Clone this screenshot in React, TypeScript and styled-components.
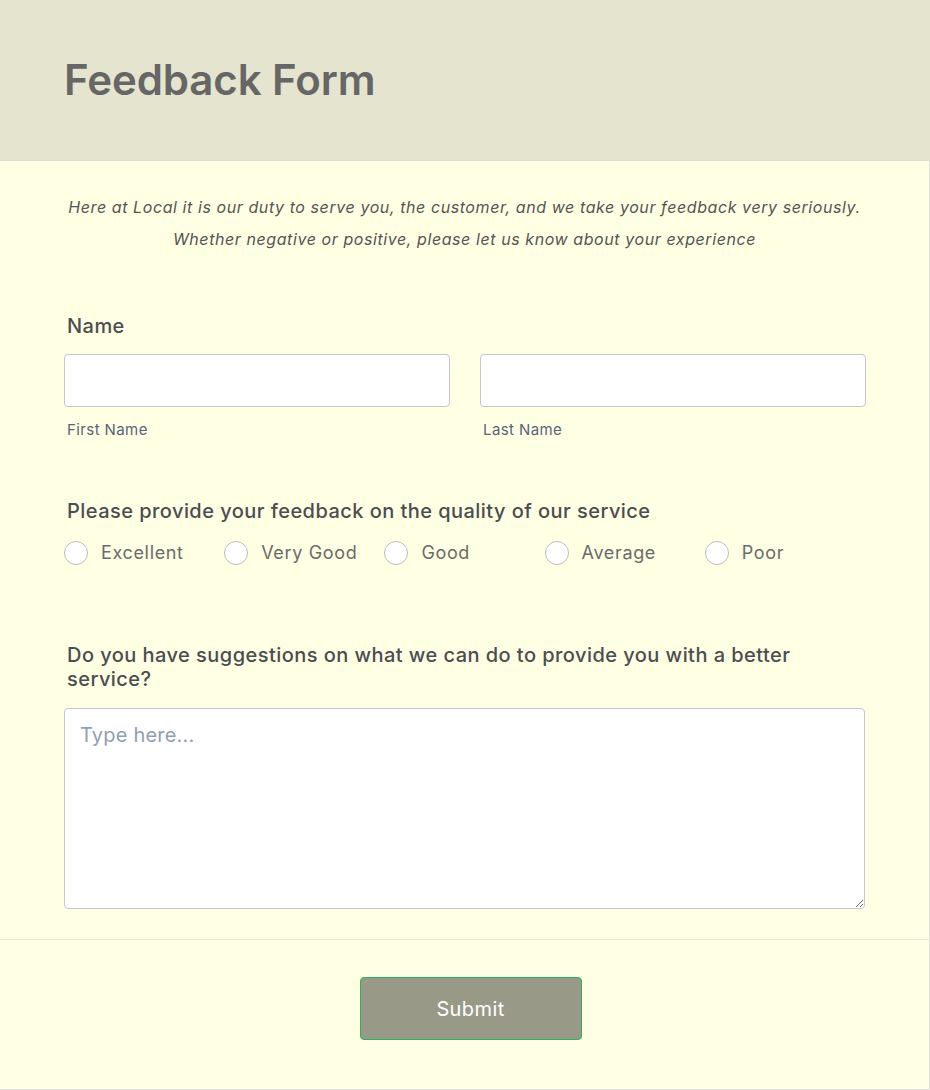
import styled, { createGlobalStyle } from "styled-components";

const GlobalStyle = createGlobalStyle`
  html, body {
    margin: 0;
    padding: 0;
    background: #ffffe3;
  }
  body {
    font-family: Inter, "Noto Sans", sans-serif;
  }
  * {
    box-sizing: border-box;
  }
`;

const ratings = ["Excellent", "Very Good", "Good", "Average", "Poor"];

const App = () => {
  return (
    <>
      <GlobalStyle />
      <StyledPage>
        <StyledHeader>
          <StyledTitle>Feedback Form</StyledTitle>
        </StyledHeader>
        <StyledBody>
          <StyledIntro>
            Here at Local it is our duty to serve you, the customer, and we take your feedback very seriously.
            <br />
            Whether negative or positive, please let us know about your experience
          </StyledIntro>

          <StyledSection $top={59}>
            <StyledLabel>Name</StyledLabel>
            <StyledNameRow>
              <StyledField>
                <StyledInput type="text" />
                <StyledSubLabel>First Name</StyledSubLabel>
              </StyledField>
              <StyledField>
                <StyledInput type="text" />
                <StyledSubLabel>Last Name</StyledSubLabel>
              </StyledField>
            </StyledNameRow>
          </StyledSection>

          <StyledSection $top={60}>
            <StyledLabel $bottom={17}>Please provide your feedback on the quality of our service</StyledLabel>
            <StyledRadioGrid>
              {ratings.map((r) => (
                <StyledRadioItem key={r}>
                  <StyledRadio type="radio" name="quality" />
                  <span>{r}</span>
                </StyledRadioItem>
              ))}
            </StyledRadioGrid>
          </StyledSection>

          <StyledSection $top={77}>
            <StyledLabel $bottom={17}>
              Do you have suggestions on what we can do to provide you with a better service?
            </StyledLabel>
            <StyledTextarea placeholder="Type here..." />
          </StyledSection>
        </StyledBody>
        <StyledFooter>
          <StyledSubmit type="button">Submit</StyledSubmit>
        </StyledFooter>
      </StyledPage>
    </>
  );
};

const StyledPage = styled.div`
  width: 930px;
  min-height: 1090px;
  display: flex;
  flex-direction: column;
`;

const StyledHeader = styled.div`
  height: 161px;
  background: #e5e5cf;
  border-bottom: 1px solid #dedede;
  padding: 55px 64px 0 64px;
`;

const StyledTitle = styled.h1`
  margin: 0;
  color: #666666;
  font-size: 42px;
  font-weight: 600;
  line-height: 50px;
  letter-spacing: -0.1px;
`;

const StyledBody = styled.div`
  background: #ffffe3;
  border-right: 1px solid #e0e0e0;
  border-bottom: 1px solid #e6e6dc;
  padding: 30px 64px 30px 64px;
`;

const StyledIntro = styled.p`
  margin: 0;
  text-align: center;
  font-style: italic;
  font-size: 16px;
  line-height: 32px;
  letter-spacing: 0.58px;
  color: #555555;
`;

const StyledSection = styled.div<{ $top: number }>`
  margin-top: ${(p) => p.$top}px;
  display: flex;
  flex-direction: column;
`;

const StyledLabel = styled.div<{ $bottom?: number }>`
  padding-left: 3px;
  color: #4b4d52;
  font-size: 20px;
  font-weight: 500;
  line-height: 24px;
  letter-spacing: 0.45px;
  margin-bottom: ${(p) => p.$bottom ?? 16}px;
`;

const StyledNameRow = styled.div`
  display: grid;
  grid-template-columns: 386px 386px;
  column-gap: 30px;
`;

const StyledField = styled.div`
  display: flex;
  flex-direction: column;
`;

const StyledInput = styled.input`
  height: 53px;
  width: 100%;
  background: #ffffff;
  border: 1px solid #c3c6cf;
  border-radius: 4px;
  outline: none;
`;

const StyledSubLabel = styled.span`
  margin-top: 14px;
  padding-left: 3px;
  font-size: 15px;
  line-height: 18px;
  letter-spacing: 0.4px;
  color: #57647e;
`;

const StyledRadioGrid = styled.div`
  display: grid;
  grid-template-columns: repeat(5, 160.2px);
`;

const StyledRadioItem = styled.label`
  display: flex;
  align-items: center;
  gap: 13px;
  font-size: 18px;
  letter-spacing: 0.65px;
  color: #6b6b6b;
  line-height: 26px;
`;

const StyledRadio = styled.input`
  appearance: none;
  margin: 0;
  width: 24px;
  height: 24px;
  border-radius: 50%;
  border: 1px solid #b9bcc6;
  background: #ffffff;
`;

const StyledTextarea = styled.textarea`
  height: 201px;
  width: 801px;
  background: #ffffff;
  border: 1px solid #c3c6cf;
  border-radius: 4px;
  padding: 14px 15px;
  font-family: Inter, "Noto Sans", sans-serif;
  font-size: 20px;
  letter-spacing: 0.2px;
  color: #333;
  outline: none;

  &::placeholder {
    color: #8fa0b3;
  }
`;

const StyledFooter = styled.div`
  flex: 1;
  background: #ffffe3;
  border-right: 1px solid #e0e0e0;
  border-bottom: 1px solid #e0e0e0;
  display: flex;
  justify-content: center;
  padding: 37px 0 0 12px;
`;

const StyledSubmit = styled.button`
  width: 222px;
  height: 63px;
  background: #999988;
  border: 1px solid #2eb15a;
  border-radius: 4px;
  color: #ffffff;
  font-family: Inter, "Noto Sans", sans-serif;
  font-size: 20px;
  font-weight: 400;
  letter-spacing: 0.4px;
`;

export default App;
